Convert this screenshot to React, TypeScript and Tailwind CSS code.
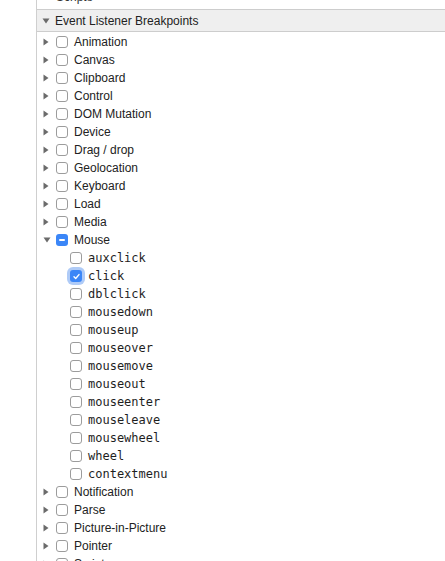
import React from "react";

const categories1 = [
  "Animation",
  "Canvas",
  "Clipboard",
  "Control",
  "DOM Mutation",
  "Device",
  "Drag / drop",
  "Geolocation",
  "Keyboard",
  "Load",
  "Media",
];
const mouseEvents = [
  "auxclick",
  "click",
  "dblclick",
  "mousedown",
  "mouseup",
  "mouseover",
  "mousemove",
  "mouseout",
  "mouseenter",
  "mouseleave",
  "mousewheel",
  "wheel",
  "contextmenu",
];
const categories2 = ["Notification", "Parse", "Picture-in-Picture", "Pointer", "Script"];

function TriRight() {
  return (
    <svg width="6" height="8" viewBox="0 0 6 8" className="shrink-0">
      <polygon points="0.5,0.5 5.5,4 0.5,7.5" fill="#6b6b6b" />
    </svg>
  );
}
function TriDown() {
  return (
    <svg width="8" height="6" viewBox="0 0 8 6" className="shrink-0">
      <polygon points="0.5,0.5 7.5,0.5 4,5.5" fill="#6b6b6b" />
    </svg>
  );
}

function Box({ state }: { state?: "checked" | "mixed" }) {
  if (state === "checked") {
    return (
      <div className="w-[12px] h-[12px] rounded-[3px] bg-[#3b86f7] flex items-center justify-center shrink-0 shadow-[0_0_0_3px_rgba(96,152,240,0.5)]">
        <svg width="9" height="9" viewBox="0 0 9 9">
          <path d="M2 4.8 L3.7 6.5 L7 2.6" stroke="white" strokeWidth="1.4" fill="none" strokeLinecap="round" strokeLinejoin="round" />
        </svg>
      </div>
    );
  }
  if (state === "mixed") {
    return (
      <div className="w-[12px] h-[12px] rounded-[3px] bg-[#3b86f7] flex items-center justify-center shrink-0">
        <div className="w-[6px] h-[2px] bg-white rounded-[1px]" />
      </div>
    );
  }
  return <div className="w-[12px] h-[12px] rounded-[3px] border border-[#9c9c9c] bg-white shrink-0" />;
}

function CatRow({ label, open }: { label: string; open?: boolean }) {
  return (
    <div className="h-[18px] shrink-0 flex items-center">
      <div className="w-[19px] flex items-center pl-[6px]">{open ? <TriDown /> : <TriRight />}</div>
      <Box state={open ? "mixed" : undefined} />
      <span className="ml-[6px] whitespace-nowrap">{label}</span>
    </div>
  );
}

function SubRow({ label, checked }: { label: string; checked?: boolean }) {
  return (
    <div className="h-[18px] shrink-0 flex items-center pl-[33px]">
      <Box state={checked ? "checked" : undefined} />
      <span className="ml-[6px] whitespace-nowrap font-['DejaVu_Sans_Mono',monospace] text-[12px] text-[#1e1e1e]">{label}</span>
    </div>
  );
}

export default function App() {
  return (
    <div className="w-[445px] h-[561px] overflow-hidden bg-white font-['Liberation_Sans',Arial,sans-serif] text-[12px] text-[#222]">
      <div className="ml-[36px] h-full border-l border-[#cfcfcf] flex flex-col">
        <div className="-mt-[12px] h-[18px] shrink-0 flex items-center pl-[19px] text-[#333]">Scripts</div>
        <div className="h-[23px] shrink-0 mt-[3px] bg-[#efefef] border-y border-[#cdcdcd] flex items-center pl-[5px]">
          <TriDown />
          <span className="ml-[5px] text-[#222]">Event Listener Breakpoints</span>
        </div>
        <div className="pt-px flex flex-col shrink-0">
          {categories1.map((c) => (
            <CatRow key={c} label={c} />
          ))}
          <CatRow label="Mouse" open />
          {mouseEvents.map((e) => (
            <SubRow key={e} label={e} checked={e === "click"} />
          ))}
          {categories2.map((c) => (
            <CatRow key={c} label={c} />
          ))}
        </div>
      </div>
    </div>
  );
}
